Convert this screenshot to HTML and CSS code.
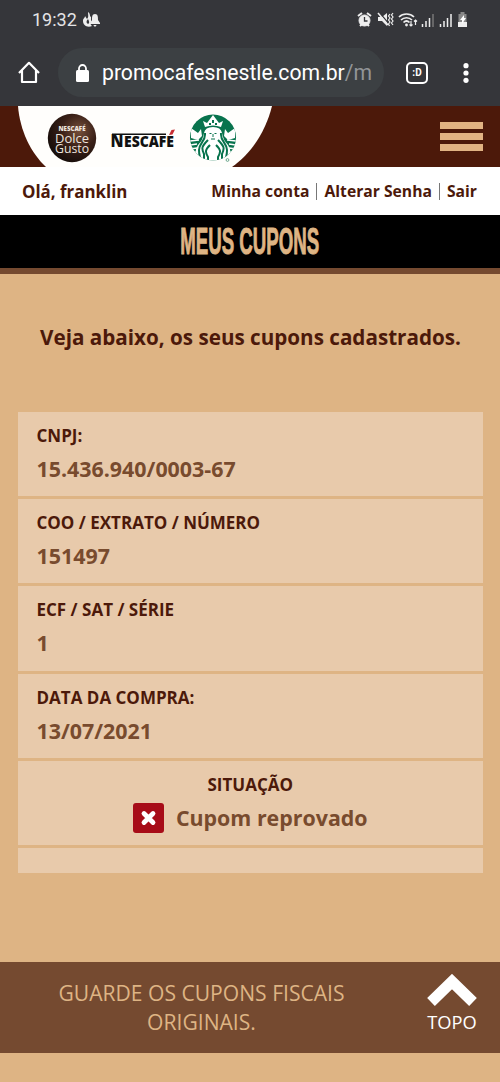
FILE: index.html
```html
<!DOCTYPE html>
<html lang="pt-BR">
<head>
<meta charset="utf-8">
<title>Meus Cupons</title>
<link rel="stylesheet" href="styles.css">
</head>
<body>
<div class="browser">
  <div class="status">
    <span class="clock">19:32</span>
    <svg class="notify" width="18" height="16" viewBox="0 0 18 16" fill="#eee"><path d="M5 0c3 2 1 4 3 5v5c-1 2 0 3 1 4-5 2-9-1-9-5 0-3 2-3 2-5l2 3c2-2 1-4 1-7z"/><path d="M5 7c-2 2-2 4 0 5 2-1 1-3 0-5z" fill="#35363a"/><path d="M12 2c3 0 3 3 3 6l2 3v1H7v-1l2-3c0-3 0-6 3-6zm-1.500 11h3c-.5 2-2.500 2-3 0z"/></svg>
    <svg class="indicators" width="114" height="18" viewBox="0 0 114 18" fill="none" stroke="#eee">
      <circle cx="7.500" cy="9.500" r="5.500" fill="#eee"/><path d="M1 5l4-3M10 2l4 3M3 15l2-2M12 15l-2-2" stroke-width="2"/><path d="M7.500 6v4h3" stroke="#35363a" stroke-width="1.300"/>
      <path d="M21 6h4l5-4v13l-5-5h-4z" fill="#eee" stroke="none"/><path d="M22 1l10 12" stroke="#35363a" stroke-width="1.200"/><path d="M21 2l10 12" stroke-width="1.500"/><path d="M33 3l-1.500 2 1.500 2-1.500 2 1.500 2-1.500 2 1 2M36 2l-1.500 2 1.500 2-1.500 2 1.500 2-1.500 2 1.500 2" stroke-width="1.200"/>
      <path d="M42 6c4-4 11-4 15 0M44 9c3-3 8-3 11 0M46.500 11.500c2-2 4-2 6 0" stroke-width="1.700"/><circle cx="49.500" cy="14" r="1.400" fill="#eee" stroke="none"/><path d="M54 10v5M52.500 13.500L54 15l1.500-1.500M58.500 14V9M57 10.500L58.500 9l1.500 1.500" stroke-width="1.200"/>
      <path d="M65.500 13v3M69 10v6M72.500 7v9M83.500 13v3M87 10v6M90.500 7v9M94 3v13" stroke-width="1.500"/><path d="M76 3v13" stroke="#777" stroke-width="1.500"/>
      <path d="M101 3h2V1h4v2h2v13h-8z" transform="translate(.5 0)" fill="#888" stroke="none"/><path d="M101 11h9v5h-9z" fill="#eee" stroke="none"/><path d="M107 4l-4 5h2v4l4-6h-2z" fill="#fff" stroke="none"/>
    </svg>
  </div>
  <div class="toolbar">
    <svg class="home" width="22" height="23" viewBox="0 0 22 23" fill="none" stroke="#fff" stroke-width="2.200"><path d="M1 12L11 1.800 21 12M4 9.500V21h14V9.500" stroke-linejoin="round"/></svg>
    <div class="address">
      <svg width="13" height="18" viewBox="0 0 13 18"><rect y="6" width="13" height="12" rx="1.500" fill="#fff"/><path d="M3 8V4.500a3.500 3.500 0 0 1 7 0V8" fill="none" stroke="#fff" stroke-width="1.800"/></svg>
      <span class="url">promocafesnestle.com.br<span class="path">/m</span></span>
    </div>
    <div class="tabs">:D</div>
    <svg class="more" width="6" height="20" viewBox="0 0 6 20" fill="#fff"><circle cx="3" cy="2.700" r="2.600"/><circle cx="3" cy="10" r="2.600"/><circle cx="3" cy="17.300" r="2.600"/></svg>
  </div>
</div>

<header class="header">
  <svg class="brands" width="272" height="61" viewBox="0 0 272 61">
    <defs><radialGradient id="coffee" cx=".65" cy=".35" r=".7"><stop offset="0" stop-color="#76503b"/><stop offset=".5" stop-color="#3b2118"/><stop offset="1" stop-color="#160d0a"/></radialGradient>
    <clipPath id="seal"><circle cx="213" cy="31.500" r="23"/></clipPath></defs>
    <path d="M18 0h254C266 25 251 48 232 61H46C31 47 20 25 18 0z" fill="#fffefc"/>
    <circle cx="72" cy="32" r="24.200" fill="url(#coffee)"/>
    <g fill="#eee5df" text-anchor="middle" font-family="Open Sans, sans-serif">
      <text x="72" y="25" font-size="7.500" font-weight="800" textLength="27" lengthAdjust="spacingAndGlyphs">NESCAFÉ</text>
      <text x="72" y="36.500" font-size="13" textLength="34" lengthAdjust="spacingAndGlyphs">Dolce</text>
      <text x="72" y="46.500" font-size="12.500" textLength="34" lengthAdjust="spacingAndGlyphs">Gusto</text>
    </g>
    <g fill="#111" font-family="Open Sans, sans-serif" font-weight="800">
      <text x="110.500" y="41" font-size="18" textLength="13" lengthAdjust="spacingAndGlyphs">N</text>
      <text x="124" y="41" font-size="15" textLength="50" lengthAdjust="spacingAndGlyphs">ESCAFE</text>
      <path d="M112 27.500h54v1.500h-54z"/>
      <path d="M169 29l2.500-5 3.500-.5-2.500 5z" fill="#c82e35"/>
    </g>
    <circle cx="213" cy="31.500" r="23" fill="#08734d"/>
    <g clip-path="url(#seal)" fill="#fff">
      <path d="M205 21l-2-6 4 2 3-4 3-4 3 4 3 4 4-2-2 6q-8-3-16 0z"/>
      <path d="M191 22l7 5 3-4 1 7-4 4-7-2zM235 22l-7 5-3-4-1 7 4 4 7-2z"/>
      <path d="M204 27q1-6 9-6t9 6q1 7 6 12 5 7 1 18h-32q-4-11 1-18 5-5 6-12z"/>
      <g fill="none" stroke="#08734d" stroke-width="2"><path d="M205 27c1 8-6 10-6 17s2 8 1 12M208 34c-6 6-7 8-4 14v8M210 39c-5 5-5 7-2 12v5M221 27c-1 8 6 10 6 17s-2 8-1 12M218 34c6 6 7 8 4 14v8M216 39c5 5 5 7 2 12v5"/></g>
      <path d="M190 35l9-1M190 39l7-1M190 43l7-1M192 47l5-1M236 35l-9-1M236 39l-7-1M236 43l-7-1M234 47l-5-1" stroke="#fff" stroke-width="1.600"/>
      <path d="M208 25q5-4 10 0v6q-2 6-5 6t-5-6z"/>
      <path d="M209.500 27.500h2M214.500 27.500h2M213 28v3M211 33h4" stroke="#08734d" stroke-width="1"/>
      <path d="M209 17h2v2h-2zM215 17h2v2h-2zM212 14h2v3h-2z" fill="#08734d"/>
    </g>
    <circle cx="227.500" cy="54" r="1.400" fill="none" stroke="#4d9476" stroke-width=".8"/>
  </svg>
  <div class="menu"><i></i><i></i><i></i></div>
</header>

<div class="account">
  <span class="hello">Olá, franklin</span>
  <nav class="links"><span>Minha conta</span><b></b><span>Alterar Senha</span><b></b><span>Sair</span></nav>
</div>

<h1 class="title"><span>MEUS CUPONS</span></h1>

<main class="content">
  <p class="intro">Veja abaixo, os seus cupons cadastrados.</p>
  <div class="coupon">
    <div class="row"><div class="label">CNPJ:</div><div class="value">15.436.940/0003-67</div></div>
    <div class="row"><div class="label">COO / EXTRATO / NÚMERO</div><div class="value">151497</div></div>
    <div class="row"><div class="label">ECF / SAT / SÉRIE</div><div class="value">1</div></div>
    <div class="row"><div class="label">DATA DA COMPRA:</div><div class="value">13/07/2021</div></div>
    <div class="row center"><div class="label">SITUAÇÃO</div><div class="value state"><svg width="31" height="30" viewBox="0 0 31 30"><rect width="31" height="30" rx="3" fill="#a70c18"/><path d="M11 10.500l9 9M20 10.500l-9 9" stroke="#fff" stroke-width="4.800" stroke-linecap="round"/></svg><span>Cupom reprovado</span></div></div>
    <div class="row last"></div>
  </div>
</main>

<footer class="footer">
  <p>GUARDE OS CUPONS FISCAIS<br>ORIGINAIS.</p>
  <div class="top"><svg width="52" height="34" viewBox="0 0 52 34"><path d="M5 28L26 7.500 47 28" fill="none" stroke="#fff" stroke-width="11"/></svg><span>TOPO</span></div>
</footer>
</body>
</html>
```
FILE: styles.css
```css
* { box-sizing: border-box; }
body { margin: 0; width: 500px; height: 1082px; overflow: hidden; background: #deb484; font-family: "Open Sans", "Noto Sans", sans-serif; color: #4c190a; }
svg { display: block; flex: none; }
p { margin: 0; }
.browser { height: 106px; background: #35363a; font-family: Roboto, sans-serif; }
.status { display: flex; align-items: center; height: 39px; padding: 0 29px 0 32px; }
.clock { width: 51px; color: #e4e4e6; font-size: 18px; }
.indicators { margin-left: auto; }
.toolbar { display: flex; align-items: center; height: 67px; padding: 0 31px 0 18px; }
.home { margin-right: 18px; }
.address { display: flex; align-items: center; gap: 13px; width: 326px; height: 49px; padding-left: 18px; border-radius: 25px; background: #3c4043; }
.url { color: #fff; font-size: 21.2px; white-space: nowrap; }
.path { color: #929598; }
.tabs { width: 22px; height: 22px; margin-left: 22px; border: 2px solid #fff; border-radius: 5px; color: #fff; font-size: 10px; font-weight: 700; line-height: 17px; text-align: center; }
.more { margin-left: auto; }
.header { display: flex; height: 61px; background: #4c190a; }
.menu { display: flex; flex-direction: column; gap: 4px; width: 43px; margin: 16px 17px 0 auto; }
.menu i { height: 7px; background: #e1b383; }
.account { display: flex; align-items: center; justify-content: space-between; height: 48px; padding: 0 23px 0 22px; background: #fff; font-size: 15.7px; font-weight: 700; }
.hello { font-size: 16.9px; }
.links { display: flex; align-items: center; gap: 7px; white-space: nowrap; }
.links b { width: 1px; height: 17px; background: #777; }
.title { display: flex; align-items: center; justify-content: center; height: 59px; margin: 0; border-bottom: 6px solid #754a30; background: #000; color: #deb484; font-family: "Liberation Sans", sans-serif; font-size: 37px; font-weight: 700; white-space: nowrap; }
.title span { transform: scaleX(.505); -webkit-text-stroke: 1px #deb484; }
.content { height: 688px; padding: 48px 17px 0 18px; }
.intro { height: 90px; font-size: 20.65px; font-weight: 700; line-height: 30px; text-align: center; white-space: nowrap; }
.coupon { display: grid; gap: 3px; }
.row { height: 84.200px; padding: 10px 19px 0 18.500px; background: #e8caab; }
.label { font-size: 17px; font-weight: 700; line-height: 28px; }
.value { height: 38px; color: #784b2e; font-size: 21.4px; font-weight: 700; line-height: 37px; }
.center { text-align: center; }
.state { display: flex; align-items: center; justify-content: center; gap: 12px; }
.last { height: 25px; }
.footer { display: flex; height: 91px; padding-left: 35px; background: #754a30; }
.footer p { width: 333px; padding-top: 16px; color: #deb484; font-size: 21.1px; line-height: 29px; text-align: center; }
.top { display: flex; flex-direction: column; align-items: center; width: 60px; margin-left: 54px; padding-top: 12px; color: #fff; font-size: 18.3px; line-height: 28px; }
```
